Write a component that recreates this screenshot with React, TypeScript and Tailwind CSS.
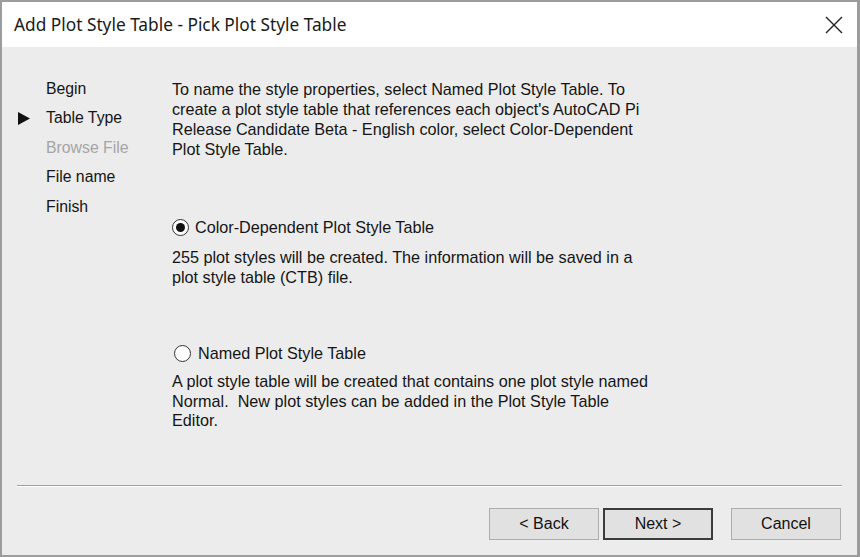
// Wizard dialog: Add Plot Style Table - Pick Plot Style Table

const steps = [
	{ label: 'Begin', active: false, disabled: false },
	{ label: 'Table Type', active: true, disabled: false },
	{ label: 'Browse File', active: false, disabled: true },
	{ label: 'File name', active: false, disabled: false },
	{ label: 'Finish', active: false, disabled: false },
];

function RadioDot({ checked }: { checked: boolean }) {
	return (
		<span className="flex h-[17px] w-[17px] shrink-0 items-center justify-center rounded-full border-[1.5px] border-[#333] bg-white">
			{checked && <span className="h-[9px] w-[9px] rounded-full bg-[#111]" />}
		</span>
	);
}

function WizButton({ label, isDefault }: { label: string; isDefault?: boolean }) {
	return (
		<button
			className={`flex h-[32px] w-[110px] items-center justify-center bg-[#e1e1e1] text-[16px] text-[#111] ${
				isDefault ? 'border-2 border-[#3c3c3c]' : 'border border-[#adadad]'
			}`}
		>
			{label}
		</button>
	);
}

export default function App() {
	return (
		<div
			className="flex h-[557px] w-[860px] flex-col border-t-2 border-l-2 border-r-[3px] border-b-2 border-[#9c9c9c] bg-[#ececec]"
			style={{ fontFamily: '"Liberation Sans", Arial, sans-serif' }}
		>
			{/* Title bar */}
			<div className="flex h-[45px] shrink-0 items-center justify-between bg-white pl-[12px] pr-[14px]">
				<span className="text-[17.3px] text-[#1a1a1a]" style={{ fontFamily: '"Noto Sans", sans-serif' }}>
					Add Plot Style Table - Pick Plot Style Table
				</span>
				<svg width="18" height="18" viewBox="0 0 18 18" className="text-[#222]">
					<path d="M1 1 L17 17 M17 1 L1 17" stroke="currentColor" strokeWidth="1.4" fill="none" />
				</svg>
			</div>

			{/* Content */}
			<div className="flex flex-1 pt-[27px] text-[16px] text-[#151515]">
				{/* Steps */}
				<div className="flex w-[170px] shrink-0 flex-col pl-[16px] text-[15.8px]">
					{steps.map((s) => (
						<div key={s.label} className="flex h-[29.5px] items-center">
							<span className="flex w-[28px] items-center">
								{s.active && (
									<svg width="12" height="13" viewBox="0 0 12 13">
										<path d="M0 0 L12 6.5 L0 13 Z" fill="#111" />
									</svg>
								)}
							</span>
							<span className={s.disabled ? 'text-[#a5a5a5]' : ''}>{s.label}</span>
						</div>
					))}
				</div>

				{/* Description and options */}
				<div className="flex flex-col pt-[5px] text-[16.2px] leading-[20px]">
					<p>
						To name the style properties, select Named Plot Style Table. To
						<br />
						create a plot style table that references each object's AutoCAD Pi
						<br />
						Release Candidate Beta - English color, select Color-Dependent
						<br />
						Plot Style Table.
					</p>

					<label className="mt-[57px] flex h-[22px] items-center gap-[6px]">
						<RadioDot checked />
						<span>Color-Dependent Plot Style Table</span>
					</label>
					<p className="mt-[9px]">
						255 plot styles will be created. The information will be saved in a
						<br />
						plot style table (CTB) file.
					</p>

					<label className="mt-[55px] flex h-[22px] items-center gap-[7px] pl-[2px]">
						<RadioDot checked={false} />
						<span>Named Plot Style Table</span>
					</label>
					<p className="mt-[8px] leading-[19.5px]">
						A plot style table will be created that contains one plot style named
						<br />
						Normal.&nbsp; New plot styles can be added in the Plot Style Table
						<br />
						Editor.
					</p>
				</div>
			</div>

			{/* Separator */}
			<div className="mx-[15px] h-[2px] shrink-0 border-t border-[#a0a0a0] border-b border-b-white" />

			{/* Buttons */}
			<div className="flex shrink-0 justify-end gap-[4px] pt-[21px] pb-[15px] pr-[16px]">
				<WizButton label="< Back" />
				<WizButton label="Next >" isDefault />
				<div className="w-[10px]" />
				<WizButton label="Cancel" />
			</div>
		</div>
	);
}
